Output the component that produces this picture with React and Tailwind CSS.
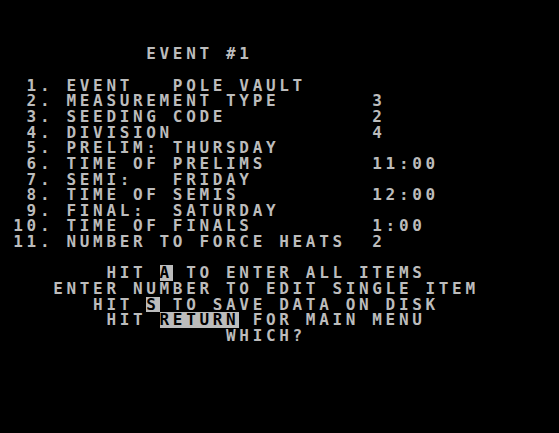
import React from "react";

// 40-column text screen. Text between { } is shown in inverse video.
const SCREEN = [
  "           EVENT #1",
  "",
  "  1. EVENT   POLE VAULT",
  "  2. MEASUREMENT TYPE       3",
  "  3. SEEDING CODE           2",
  "  4. DIVISION               4",
  "  5. PRELIM: THURSDAY",
  "  6. TIME OF PRELIMS        11:00",
  "  7. SEMI:   FRIDAY",
  "  8. TIME OF SEMIS          12:00",
  "  9. FINAL:  SATURDAY",
  " 10. TIME OF FINALS         1:00",
  " 11. NUMBER TO FORCE HEATS  2",
  "",
  "        HIT {A} TO ENTER ALL ITEMS",
  "    ENTER NUMBER TO EDIT SINGLE ITEM",
  "       HIT {S} TO SAVE DATA ON DISK",
  "        HIT {RETURN} FOR MAIN MENU",
  "                 WHICH?",
];

const parseLine = (line) => {
  const cells = [];
  let inverse = false;
  for (const ch of line) {
    if (ch === "{") inverse = true;
    else if (ch === "}") inverse = false;
    else cells.push({ ch, inverse });
  }
  return cells;
};

const TextRow = ({ line }) => (
  <div className="flex h-[15.65px] leading-[15.65px]">
    {parseLine(line).map((cell, i) => (
      <span
        key={i}
        className={
          cell.inverse
            ? "w-[13.3px] shrink-0 text-left bg-[#bcbcbc] text-black"
            : "w-[13.3px] shrink-0 text-left text-[#bcbcbc]"
        }
      >
        {cell.ch === " " ? "\u00a0" : cell.ch}
      </span>
    ))}
  </div>
);

export default function App() {
  return (
    <div
      className="w-[559px] h-[433px] bg-black pt-[46.4px] overflow-hidden text-[16px] font-bold whitespace-pre"
      style={{ fontFamily: '"DejaVu Sans Mono", monospace' }}
    >
      {SCREEN.map((line, i) => (
        <TextRow key={i} line={line} />
      ))}
    </div>
  );
}
